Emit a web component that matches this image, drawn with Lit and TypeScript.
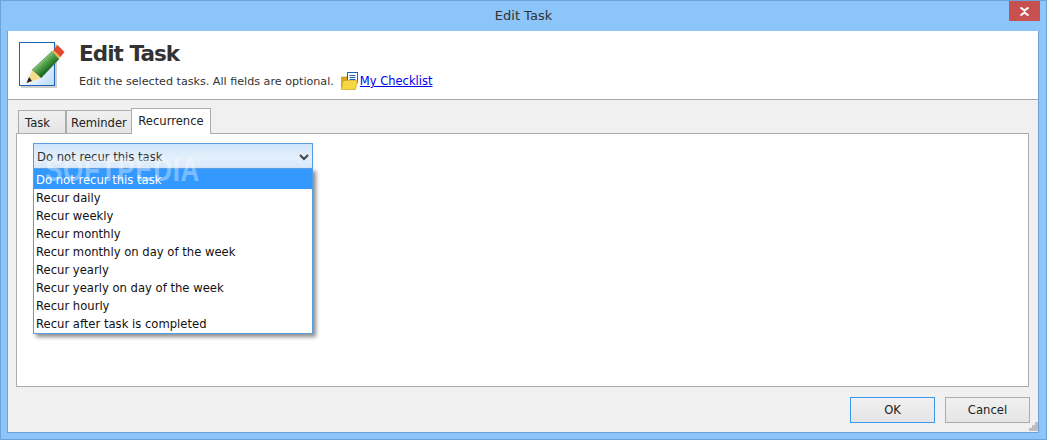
import { LitElement, html, css } from "lit";
import { customElement } from "lit/decorators.js";

const items = [
  "Do not recur this task", "Recur daily", "Recur weekly", "Recur monthly",
  "Recur monthly on day of the week", "Recur yearly", "Recur yearly on day of the week",
  "Recur hourly", "Recur after task is completed",
];

@customElement("app-root")
export class AppRoot extends LitElement {
  static styles = css`
    :host { display: block; width: 1047px; height: 440px; font-family: "DejaVu Sans", Verdana, sans-serif; font-size: 11.6px; color: #111; }
    * { box-sizing: border-box; }
    .win { width: 1047px; height: 440px; background: #8bc5f9; border: 1px solid #6fa3d6; display: flex; flex-direction: column; position: relative; overflow: hidden; }
    .title { height: 30px; flex: none; display: flex; justify-content: center; align-items: center; font-size: 13px; color: #333; padding-bottom: 1px; }
    .close { position: absolute; top: 0; right: 6px; width: 31px; height: 20px; background: #c75050; display: flex; align-items: center; justify-content: center; }
    .client { flex: 1; margin: 0 7px 6px 6px; border: 1px solid #6fa3d6; border-top: 0; background: #f0f0f0; display: flex; flex-direction: column; }
    .head { height: 69px; flex: none; background: #fff; border-bottom: 1px solid #a9a9a9; display: flex; padding: 11px 0 0 11px; }
    .logo { width: 48px; height: 48px; flex: none; margin-right: 12px; }
    .htext { display: flex; flex-direction: column; }
    h1 { margin: 0; font-size: 21.5px; line-height: 24px; font-weight: 700; color: #333; letter-spacing: -.95px; }
    .sub { display: flex; align-items: center; margin-top: 5px; height: 20px; font-size: 11.15px; color: #333; }
    .folder { width: 19px; height: 19px; margin: 0 0 0 7px; flex: none; }
    a { color: #0000ee; text-decoration: underline; font-size: 11.5px; }
    .body { flex: 1; padding: 7px 9px 0 8px; display: flex; flex-direction: column; }
    .tabs { display: flex; height: 26px; flex: none; align-items: flex-end; padding-left: 2px; position: relative; z-index: 1; }
    .tab { height: 23px; border: 1px solid #acacac; border-bottom: 0; background: linear-gradient(#f0f0f0, #e5e5e5); display: flex; align-items: center; justify-content: center; color: #222; padding-top: 2px; }
    .t1 { width: 48px; justify-content: flex-start; padding-left: 6px; }
    .t2 { width: 66px; }
    .t3 { width: 80px; height: 26px; background: #fff; margin-left: -1px; margin-bottom: -1px; padding: 0 0 1px; }
    .panel { height: 254px; flex: none; background: #fff; border: 1px solid #acacac; padding: 9px 16px; position: relative; }
    .select { width: 280px; height: 26px; border: 1px solid #5b9de1; background: linear-gradient(#cfe5fb, #e4f0fc 55%, #d8e9fb); display: flex; align-items: center; justify-content: space-between; padding: 2px 3px 0; color: #333; }
    .drop { width: 280px; height: 166px; margin-top: -1px; position: relative; background: #fff; border: 1px solid #5b9de1; box-shadow: 3px 3px 4px rgba(0,0,0,.45); }
    .row { height: 18px; line-height: 18px; padding-left: 2px; white-space: nowrap; color: #111; }
    .row.on { height: 20px; line-height: 22px; background: #3399ff; color: #fff; }
    .wm { position: absolute; left: 28px; top: 17px; font: 700 26px "Liberation Sans", sans-serif; color: rgba(255,255,255,.36); letter-spacing: .7px; transform: scaleY(1.25); transform-origin: left top; pointer-events: none; }
    .foot { flex: 1; display: flex; justify-content: flex-end; gap: 10px; padding: 10px 0 0 0; position: relative; margin-right: -1px; }
    .btn { width: 85px; height: 26px; border: 1px solid #acacac; background: linear-gradient(#f0f0f0, #e5e5e5); display: flex; align-items: center; justify-content: center; color: #222; }
    .btn.def { border-color: #3d98f0; }
    .grip { position: absolute; right: -8px; bottom: 1px; width: 9px; height: 9px; }
  `;

  render() {
    return html`<div class="win">
      <div class="title">Edit Task</div>
      <div class="close"><svg width="11" height="9" viewBox="0 0 11 9"><path d="M1.500 .5 5.500 3.500 9.500 .5M1.500 8.500 5.500 5.500 9.500 8.500" fill="none" stroke="#fff" stroke-width="2"/></svg></div>
      <div class="client">
        <div class="head">
          <svg class="logo" viewBox="0 0 48 48">
            <defs>
              <linearGradient id="pg" x1="0" y1="0" x2="1" y2="1"><stop offset=".45" stop-color="#fff"/><stop offset="1" stop-color="#b8d9fa"/></linearGradient>
              <linearGradient id="gr" gradientUnits="userSpaceOnUse" x1="21" y1="17" x2="30" y2="27"><stop offset="0" stop-color="#a8d894"/><stop offset=".5" stop-color="#4fa047"/><stop offset="1" stop-color="#1c6a24"/></linearGradient>
            </defs>
            <rect x="2" y="2" width="36" height="44" fill="#888" opacity=".4"/>
            <rect x=".5" y=".5" width="35" height="43" fill="url(#pg)" stroke="#1e64b4"/>
            <path d="M13 28 33 9.500 40 17 22 36Z" fill="url(#gr)" stroke="#2c6a2c" stroke-width=".5"/>
            <path d="M13 28 22 36 8 41Z" fill="#f5dc8c"/>
            <path d="M10 35 13 39 7.500 41Z" fill="#222"/>
            <path d="M33 9.500 34.500 8 41.500 15 40 17Z" fill="#dcb84e"/>
            <path d="M34.500 8 38.500 3 45.500 10 41.500 15Z" fill="#e4482c"/>
          </svg>
          <div class="htext">
            <h1>Edit Task</h1>
            <div class="sub">Edit the selected tasks. All fields are optional.
              <svg class="folder" viewBox="0 0 19 19">
                <path d="M.5 5h5l1-1h3v12H.5Z" fill="#d9a81e" stroke="#b58a12" stroke-width=".6"/>
                <rect x="6.500" y=".5" width="10" height="10" fill="#fff" stroke="#1e64b4"/>
                <path d="M8.500 3.500h6M8.500 5.500h6M8.500 7.500h6" stroke="#1e64b4"/>
                <path d="M.5 17.500 2 8.500h14.500L14.500 17.500Z" fill="#f7d740" stroke="#c79a16" stroke-width=".6"/>
              </svg><a href="#">My Checklist</a>
            </div>
          </div>
        </div>
        <div class="body">
          <div class="tabs">
            <div class="tab t1">Task</div>
            <div class="tab t2">Reminder</div>
            <div class="tab t3">Recurrence</div>
          </div>
          <div class="panel">
            <div class="select"><span>Do not recur this task</span>
              <svg width="10" height="7" viewBox="0 0 10 7"><path d="M1 1 5 5 9 1" fill="none" stroke="#444" stroke-width="2"/></svg>
            </div>
            <div class="drop">${items.map((t, i) => html`<div class="row ${i === 0 ? "on" : ""}">${t}</div>`)}</div>
            <div class="wm">SOFTPEDIA</div>
          </div>
          <div class="foot">
            <div class="btn def">OK</div>
            <div class="btn">Cancel</div>
            <svg class="grip" viewBox="0 0 9 9"><path d="M6 0h3v3H6zM3 3h3v3H3zM6 3h3v3H6zM0 6h3v3H0zM3 6h3v3H3zM6 6h3v3H6z" fill="#bdbdbd"/></svg>
          </div>
        </div>
      </div>
    </div>`;
  }
}
